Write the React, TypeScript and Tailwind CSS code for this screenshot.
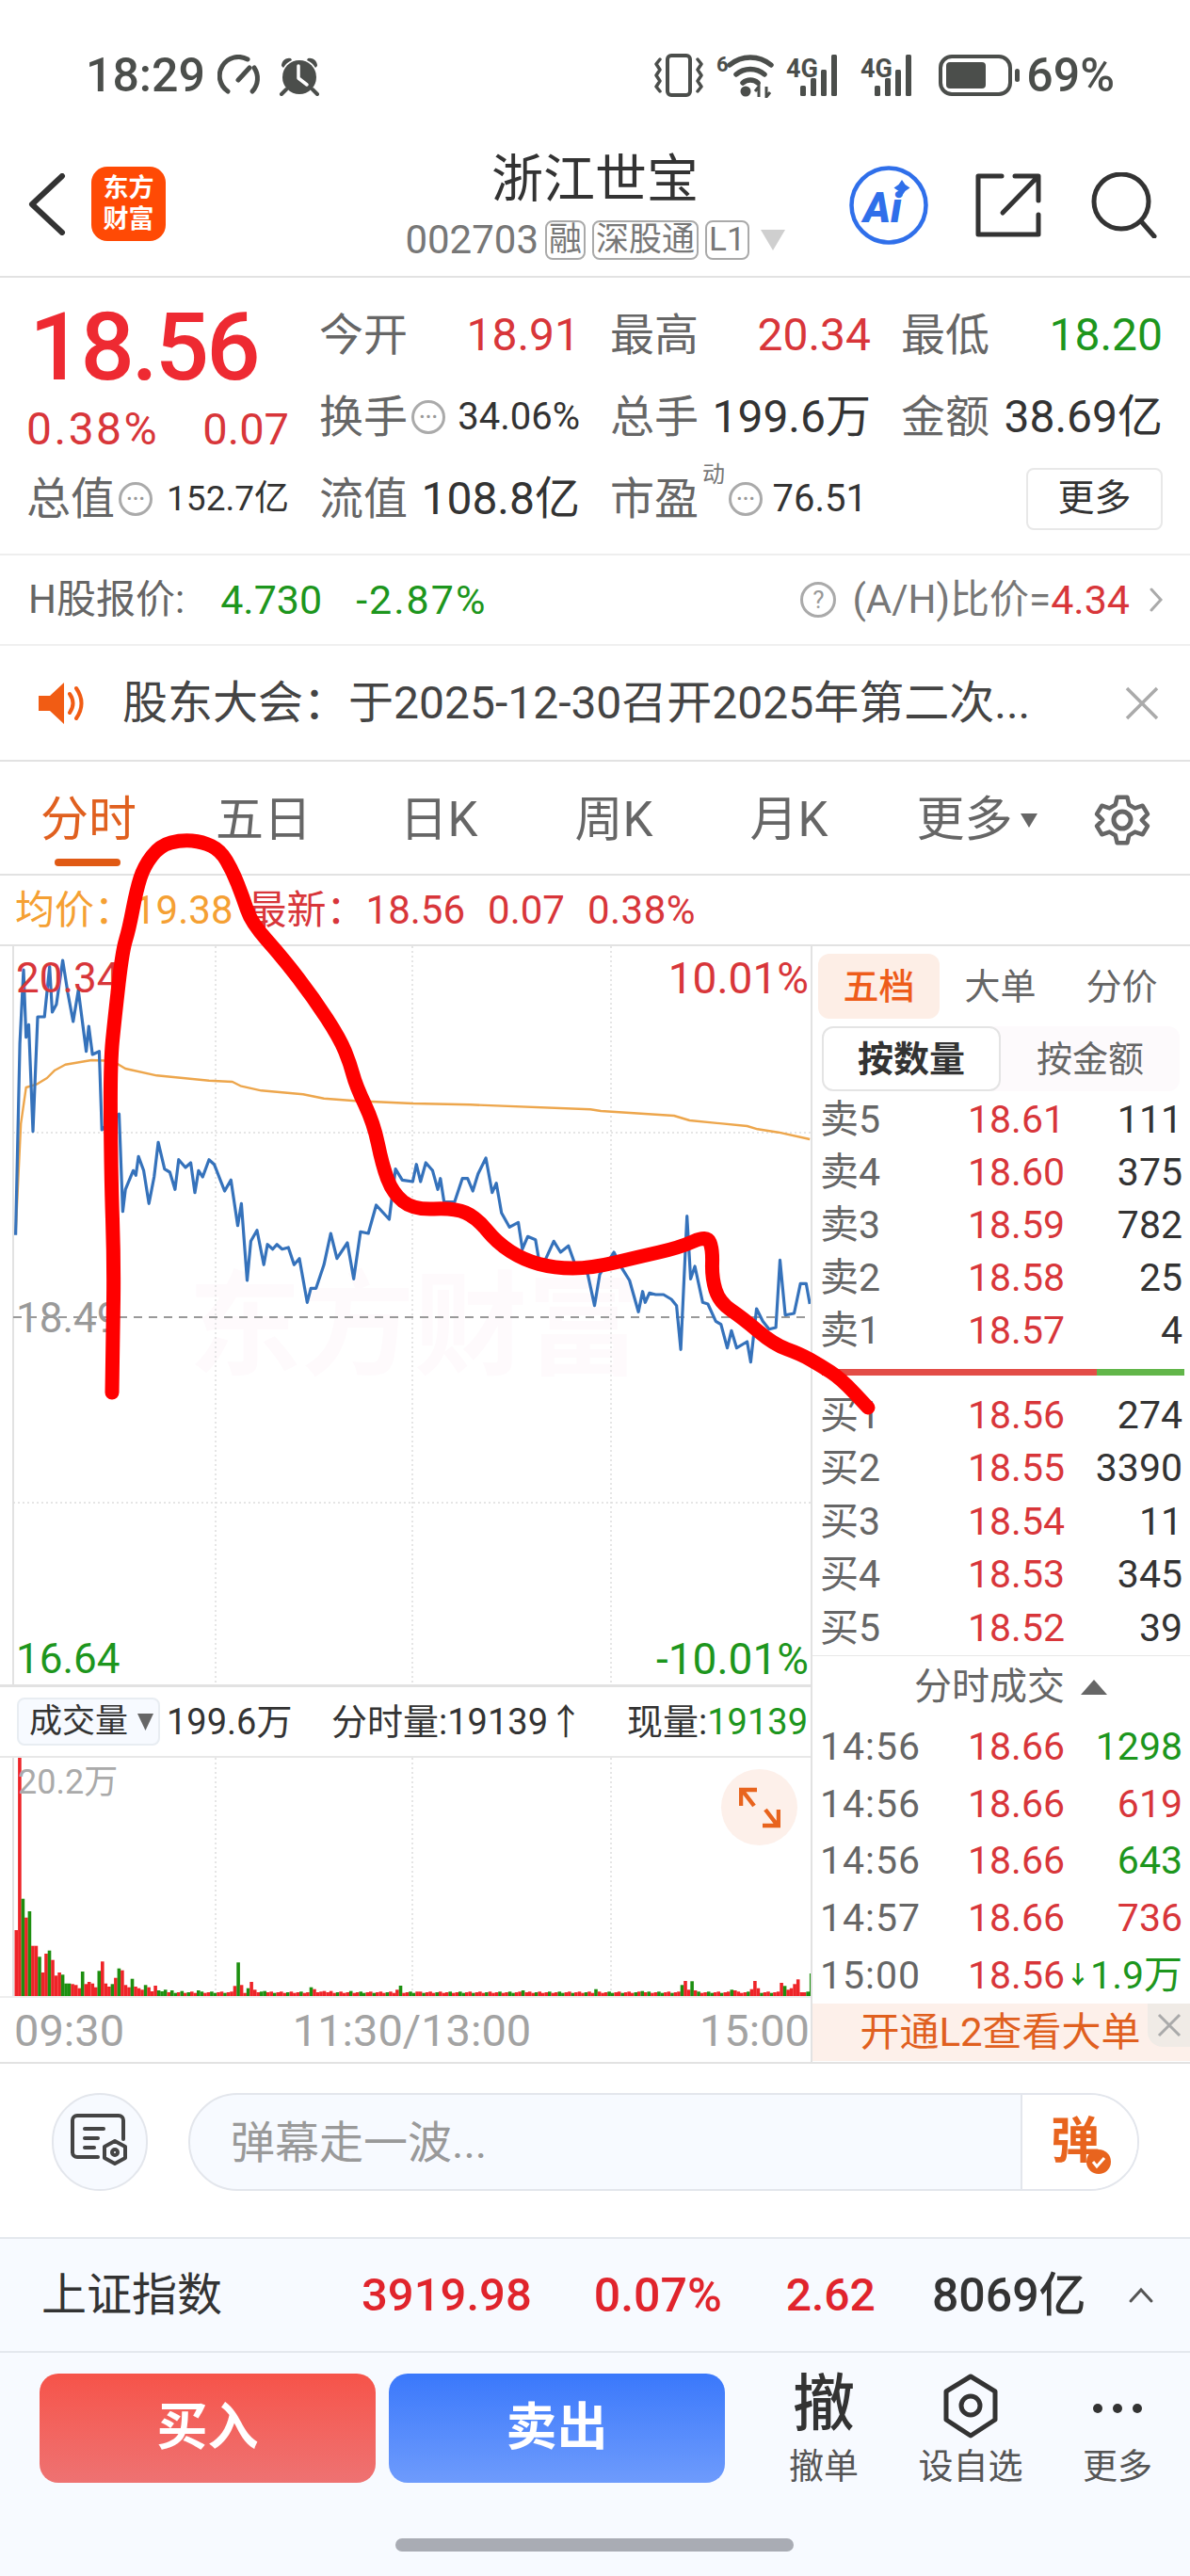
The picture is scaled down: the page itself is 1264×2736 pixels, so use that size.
const BLUE = [30,995,38,385,45,150,50,365,55,325,63,665,72,300,85,300,95,140,100,285,108,260,120,120,130,225,140,315,150,215,165,410,170,330,177,420,190,410,195,660,228,610,235,920,240,850,255,790,260,805,265,745,275,790,285,895,295,810,303,700,315,785,325,795,335,850,342,755,355,780,365,765,373,860,380,790,388,810,400,755,410,770,430,855,442,820,455,965,462,895,473,1140,480,1015,492,980,505,1090,512,1025,522,1040,530,1025,540,1040,552,1035,563,1090,573,1070,588,1210,595,1165,605,1165,620,1090,633,990,645,1070,665,1020,677,1135,690,985,705,990,720,900,745,945,757,785,770,820,790,825,797,770,805,825,815,765,828,790,838,850,843,815,850,890,870,890,885,815,895,815,905,855,915,800,930,750,942,860,950,830,960,925,975,970,992,955,1000,1040,1010,1000,1025,1010,1033,1090,1045,1070,1060,1015,1073,1050,1088,1030,1100,1085,1125,1120,1138,1220,1148,1120,1175,1050,1190,1100,1205,1140,1222,1240,1230,1175,1235,1210,1243,1180,1255,1185,1270,1185,1285,1200,1295,1220,1303,1360,1315,935,1322,1135,1330,1095,1345,1210,1355,1215,1370,1270,1380,1280,1392,1355,1400,1300,1410,1355,1430,1335,1437,1400,1448,1230,1460,1270,1472,1295,1485,1290,1493,1075,1503,1250,1520,1245,1532,1150,1543,1150,1550,1215];
const AVG = [30,990,40,640,50,525,70,515,90,495,105,470,125,452,175,438,215,440,240,465,300,487,400,503,445,507,460,520,500,535,580,547,620,560,680,568,790,576,900,580,1130,595,1150,600,1290,615,1320,630,1430,648,1450,658,1490,668,1550,690];

// hand drawn stroke, page coordinates
const SCRIBBLE = [[119,1479],[120,1420],[121,1340],[118,1250],[117,1130],[122,1080],[130,1010],[137,987],[145,945],[153,920],[170,898],[193,892],[215,894],[234,903],[247,925],[258,953],[267,980],[300,1017],[333,1060],[361,1103],[372,1130],[378,1153],[397,1193],[406,1237],[417,1267],[439,1285],[483,1283],[506,1293],[528,1320],[556,1338],[589,1347],[628,1347],[678,1335],[722,1325],[751,1312],[757,1327],[756,1357],[764,1383],[789,1400],[822,1428],[850,1438],[871,1450],[893,1464],[922,1495]];

// [index, height, 1 = green] for the tall bars, the rest is the flat tail
const VOL_BARS: [number, number, number][] = [[0,210,0],[1,760,0],[2,310,1],[3,250,0],[4,270,1],[5,160,0],[6,160,0],[7,125,1],[8,75,0],[9,135,0],[10,145,1],[11,115,0],[12,65,0],[13,75,0],[14,68,1],[15,40,1],[16,40,1],[17,38,0],[18,35,0],[19,25,0],[20,78,1],[21,38,0],[22,45,0],[23,40,0],[24,28,0],[25,80,1],[26,110,0],[27,40,0],[28,30,0],[29,38,1],[30,58,0],[31,88,1],[32,82,0],[33,35,0],[34,28,0],[35,55,1],[36,30,0],[37,25,0],[38,20,0],[39,35,1],[40,28,0],[41,15,0],[42,33,0],[43,18,1],[44,15,1],[45,20,1],[47,18,1],[50,16,1],[55,18,1],[66,32,0],[67,107,1],[68,35,0],[70,25,1],[71,45,0],[72,20,0],[75,16,1],[89,28,1],[90,22,0],[93,16,0],[95,16,0],[101,16,1],[115,20,0],[116,33,1],[121,14,0],[153,18,1],[175,22,1],[176,14,0],[189,16,1],[201,35,1],[202,48,0],[203,20,0],[204,47,1],[205,18,0],[216,20,1],[217,18,0],[222,22,0],[223,48,0],[224,25,0],[231,42,0],[232,32,1],[233,20,0],[234,25,0],[235,38,0],[236,53,0],[237,12,0],[240,72,1]];

const toPoints = (raw: number[]) => {
  const out: string[] = [];
  for (let i = 0; i < raw.length; i += 2) {
    out.push(`${(raw[i] / 1.802).toFixed(1)},${(raw[i + 1] / 3 - 25).toFixed(1)}`);
  }
  return out.join(' ');
};

const smoothPath = (pts: number[][]) => {
  let d = `M${pts[0][0]} ${pts[0][1]}`;
  for (let i = 1; i < pts.length - 1; i++) {
    const mx = (pts[i][0] + pts[i + 1][0]) / 2;
    const my = (pts[i][1] + pts[i + 1][1]) / 2;
    d += ` Q${pts[i][0]} ${pts[i][1]} ${mx} ${my}`;
  }
  const last = pts[pts.length - 1];
  return `${d} L${last[0]} ${last[1]}`;
};

const volumeBars = () => {
  const map = new Map(VOL_BARS.map((b) => [b[0], b]));
  return Array.from({ length: 241 }, (_, i) => {
    const bar = map.get(i);
    const green = bar ? bar[2] === 1 : (i * 7 + (i % 5)) % 3 === 0;
    const h = bar ? bar[1] : 10 + ((i * 13) % 3) * 2;
    return { i, green, h };
  });
};

const SELLS = [
  ['卖5', '18.61', '111'],
  ['卖4', '18.60', '375'],
  ['卖3', '18.59', '782'],
  ['卖2', '18.58', '25'],
  ['卖1', '18.57', '4'],
];
const BUYS = [
  ['买1', '18.56', '274'],
  ['买2', '18.55', '3390'],
  ['买3', '18.54', '11'],
  ['买4', '18.53', '345'],
  ['买5', '18.52', '39'],
];
const TRADES = [
  ['14:56', '18.66', '1298', 'text-[#1d961d]'],
  ['14:56', '18.66', '619', 'text-[#d8363a]'],
  ['14:56', '18.66', '643', 'text-[#1d961d]'],
  ['14:57', '18.66', '736', 'text-[#d8363a]'],
];

const Signal = () => (
  <svg width="66" height="44" viewBox="0 0 66 44" fill="#4b4e4b">
    <text x="0" y="24" fontSize="27" fontWeight="700" fontFamily="Roboto">4G</text>
    <rect x="15" y="33" width="6" height="11" rx="1.5" />
    <rect x="26" y="25" width="6" height="19" rx="1.5" />
    <rect x="37" y="16" width="6" height="28" rx="1.5" />
    <rect x="48" y="0" width="6" height="44" rx="1.5" />
  </svg>
);

const StatusBar = () => (
  <div className="flex h-[134px] items-start justify-between pl-[91px] pr-[80px] pt-[52px] text-[#4b4e4b]">
    <div className="flex items-center">
      <span className="text-[50px] font-medium leading-[56px]">18:29</span>
      <svg className="ml-[13px]" width="48" height="44" viewBox="0 0 48 44" fill="none" stroke="#4b4e4b" strokeWidth="5" strokeLinecap="round">
        <path d="M11 39A20 20 0 0 1 32 5" />
        <path d="M39 14A20 20 0 0 1 37 39" />
        <path d="M22 27L34 14" />
      </svg>
      <svg className="ml-[17px]" width="44" height="44" viewBox="0 0 44 44" fill="#4b4e4b">
        <circle cx="22" cy="24" r="18" />
        <path d="M3 12a8 8 0 0 1 10-8l1 2a18 18 0 0 0-9 8zM41 12a8 8 0 0 0-10-8l-1 2a18 18 0 0 1 9 8z" />
        <path d="M8 37l-5 5M36 37l5 5" stroke="#4b4e4b" strokeWidth="4" strokeLinecap="round" />
        <path d="M21 12v13l9 7" fill="none" stroke="#fff" strokeWidth="3.5" strokeLinecap="round" strokeLinejoin="round" />
      </svg>
    </div>
    <div className="flex items-center">
      <svg width="52" height="46" viewBox="0 0 52 46" fill="none" stroke="#4b4e4b" strokeLinecap="round" strokeLinejoin="round">
        <rect x="14" y="2" width="24" height="42" rx="4" strokeWidth="4" />
        <path d="M6 6l-4 5 4 6-4 6 4 6-4 6 4 5M46 6l4 5-4 6 4 6-4 6 4 6-4 5" strokeWidth="3.5" />
      </svg>
      <svg className="ml-[14px]" width="62" height="48" viewBox="0 0 62 48" fill="#4b4e4b">
        <text x="0" y="20" fontSize="22" fontWeight="700" fontFamily="Roboto">6</text>
        <path d="M14 13a34 34 0 0 1 44 0M21 23a23 23 0 0 1 30 0M28 32a12 12 0 0 1 16 0" fill="none" stroke="#4b4e4b" strokeWidth="5.5" strokeLinecap="round" />
        <circle cx="31" cy="41" r="5.5" />
        <path d="M45 47V36l-4 5M53 36v11l4-5" fill="none" stroke="#4b4e4b" strokeWidth="3" />
      </svg>
      <div className="ml-[12px]"><Signal /></div>
      <div className="ml-[13px]"><Signal /></div>
      <svg className="ml-[17px]" width="87" height="44" viewBox="0 0 87 44" fill="none">
        <rect x="2" y="2" width="74" height="40" rx="12" stroke="#4b4e4b" strokeWidth="4" />
        <rect x="8" y="8" width="42" height="28" rx="4" fill="#4b4e4b" />
        <rect x="81" y="15" width="5" height="14" rx="2.5" fill="#4b4e4b" />
      </svg>
      <span className="ml-[6px] text-[50px] font-medium leading-[56px]">69%</span>
    </div>
  </div>
);

const Tag = ({ text }: { text: string }) => (
  <span className="ml-[7px] rounded-[8px] border-2 border-[#aaa] px-[2px] text-[35px] leading-[38px]">{text}</span>
);

const NavBar = () => (
  <div className="relative flex h-[161px] items-start border-b-2 border-[#e2e2e2]">
    <svg className="ml-[30px] mt-[50px]" width="40" height="66" viewBox="0 0 40 66" fill="none" stroke="#333" strokeWidth="6" strokeLinecap="round" strokeLinejoin="round">
      <path d="M36 3L4 33l32 30" />
    </svg>
    <div className="ml-[27px] mt-[43px] flex h-[79px] w-[79px] flex-col items-center justify-center rounded-[17px] bg-[#ff4a05] text-[27px] font-bold leading-[33px] text-white">
      <span>东方</span>
      <span>财富</span>
    </div>
    <div className="absolute left-0 right-0 top-[20px] flex flex-col items-center">
      <span className="text-[55px] leading-[72px] text-[#333]">浙江世宝</span>
      <div className="mt-[7px] flex items-center text-[#777]">
        <span className="text-[42px] leading-[44px]">002703</span>
        <Tag text="融" />
        <Tag text="深股通" />
        <Tag text="L1" />
        <svg className="ml-[12px]" width="26" height="22" viewBox="0 0 26 22" fill="#cfcfcf"><path d="M0 0h26L13 22z" /></svg>
      </div>
    </div>
    <div className="ml-auto mr-[35px] mt-[42px] flex items-center">
      <svg width="84" height="84" viewBox="0 0 84 84" fill="none">
        <circle cx="42" cy="42" r="39.5" stroke="#2f6fea" strokeWidth="4.5" />
        <text x="15" y="60" fontSize="44" fontWeight="900" fontStyle="italic" fontFamily="Roboto" fill="#2f6fea">Ai</text>
        <path d="M56 15l3.5 5 5 3.5-5 3.5-3.5 5-3.5-5-5-3.5 5-3.5z" fill="#2f6fea" />
      </svg>
      <svg className="ml-[50px]" width="70" height="68" viewBox="0 0 70 68" fill="none" stroke="#333" strokeWidth="5" strokeLinecap="round" strokeLinejoin="round">
        <path d="M28 3H3v62h64V44" />
        <path d="M29 42L66 4M42 3h25v26" />
      </svg>
      <svg className="ml-[53px]" width="70" height="70" viewBox="0 0 70 70" fill="none" stroke="#333" strokeWidth="5" strokeLinecap="round">
        <circle cx="32" cy="31" r="29" />
        <path d="M53 52l14 16" />
      </svg>
    </div>
  </div>
);

const QuoteCell = ({ label, value, color = 'text-[#333]', size = 'text-[48px]', hint, sup }: { label: string; value: string; color?: string; size?: string; hint?: boolean; sup?: boolean }) => (
  <div className="flex items-center justify-between leading-none">
    <span className="flex items-center text-[47px] text-[#666]">
      <span className="relative">
        {label}
        {sup && <span className="absolute -right-[28px] -top-[14px] text-[24px] text-[#777]">动</span>}
      </span>
      {hint && (
        <span className={`flex h-[36px] w-[36px] items-center justify-center rounded-full border-[3px] border-[#aaa] text-[20px] font-bold leading-none text-[#999] ${sup ? 'ml-[32px]' : 'ml-[4px]'}`}>⋯</span>
      )}
    </span>
    <span className={`${size} ${color}`}>{value}</span>
  </div>
);

const Quote = () => (
  <div className="h-[295px] border-b-2 border-[#eeeeee] pl-[28px] pt-[17px]">
    <div className="grid grid-cols-[279px_277px_277px_278px] grid-rows-[87px_87px_87px] items-center gap-x-[32px]">
      <div className="pl-[3px] pt-[26px] text-[101px] font-medium leading-none tracking-[-3px] text-[#ee2a32]">18.56</div>
      <QuoteCell label="今开" value="18.91" color="text-[#d8363a]" />
      <QuoteCell label="最高" value="20.34" color="text-[#d8363a]" />
      <QuoteCell label="最低" value="18.20" color="text-[#1d961d]" />
      <div className="flex justify-between pt-[26px] leading-none text-[#d8363a]">
        <span className="text-[48px] tracking-[2.500px]">0.38%</span>
        <span className="text-[47px]">0.07</span>
      </div>
      <QuoteCell label="换手" value="34.06%" size="text-[40px]" hint />
      <QuoteCell label="总手" value="199.6万" />
      <QuoteCell label="金额" value="38.69亿" />
      <QuoteCell label="总值" value="152.7亿" size="text-[37px]" hint />
      <QuoteCell label="流值" value="108.8亿" />
      <div className="pr-[4px]">
        <QuoteCell label="市盈" value="76.51" size="text-[40px]" hint sup />
      </div>
      <div className="flex justify-end">
        <span className="flex h-[66px] w-[145px] items-center justify-center rounded-[8px] border-2 border-[#e8e8e8] text-[39px] text-[#333]">更多</span>
      </div>
    </div>
  </div>
);

const HShare = () => (
  <div className="flex h-[96px] items-center border-b-2 border-[#f0f0f0] pl-[30px] pr-[29px] text-[43px] leading-none">
    <span className="text-[42px] text-[#666]">H股报价:</span>
    <span className="ml-[38px] text-[#1d961d]">4.730</span>
    <span className="ml-[36px] tracking-[2px] text-[#1d961d]">-2.87%</span>
    <span className="ml-auto flex h-[38px] w-[38px] items-center justify-center rounded-full border-[3px] border-[#aaa] text-[26px] text-[#999]">?</span>
    <span className="ml-[17px] text-[42px] text-[#777]">(A/H)比价=</span>
    <span className="text-[#d8363a]">4.34</span>
    <svg className="ml-[21px]" width="14" height="28" viewBox="0 0 14 28" fill="none" stroke="#aaa" strokeWidth="3" strokeLinecap="round"><path d="M2 3l10 11L2 25" /></svg>
  </div>
);

const Notice = () => (
  <div className="flex h-[123px] items-center border-b-2 border-[#e2e2e2] pl-[40px] pr-[33px]">
    <svg width="54" height="46" viewBox="0 0 54 46" fill="#f15c14">
      <path d="M1 15h12L28 1v44L13 31H1z" />
      <path d="M34 13q7 10 0 20M41 7q11 16 0 32" fill="none" stroke="#f15c14" strokeWidth="4" strokeLinecap="round" />
    </svg>
    <span className="ml-[36px] whitespace-nowrap text-[48px] leading-none text-[#444]">股东大会：于2025-12-30召开2025年第二次...</span>
    <svg className="ml-auto" width="36" height="36" viewBox="0 0 36 36" fill="none" stroke="#aaa" strokeWidth="3.5"><path d="M2 2l32 32M34 2L2 34" /></svg>
  </div>
);

const Tabs = () => (
  <div className="relative grid h-[121px] grid-cols-[186px_186px_186px_186px_186px_186px_1fr] items-center border-b-2 border-[#e2e2e2] pl-[1px] pt-[4px] text-[51px] leading-none text-[#666]">
    <span className="text-center text-[#e0601f]">分时</span>
    <span className="text-center">五日</span>
    <span className="text-center">日K</span>
    <span className="text-center">周K</span>
    <span className="text-center">月K</span>
    <span className="flex items-center justify-center pl-[27px]">
      更多
      <svg className="ml-[8px]" width="18" height="18" viewBox="0 0 18 18" fill="#666"><path d="M0 2h18L9 17z" /></svg>
    </span>
    <svg className="ml-[45px]" width="60" height="60" viewBox="0 0 60 60" fill="none" stroke="#666" strokeWidth="5" strokeLinejoin="round">
      <path d="M24 3h12l2 9 7 4 9-3 6 10-7 7 0 0 7 7-6 10-9-3-7 4-2 9H24l-2-9-7-4-9 3-6-10 7-7-7-7 6-10 9 3 7-4z" transform="translate(3 3) scale(0.9)" />
      <circle cx="30" cy="30" r="9" />
    </svg>
    <div className="absolute bottom-[8px] left-[58px] h-[8px] w-[70px] rounded-full bg-[#e05a14]" />
  </div>
);

const InfoRow = () => (
  <div className="flex h-[75px] items-center border-b-2 border-[#e2e2e2] pl-[16px] text-[42px] leading-none">
    <span className="text-[#f5a033]">均价：</span>
    <span className="text-[#f5a033]">19.38</span>
    <span className="ml-[15px] text-[#d8363a]">最新：</span>
    <span className="text-[#d8363a]">18.56</span>
    <span className="ml-[24px] text-[#d8363a]">0.07</span>
    <span className="ml-[24px] tracking-[0.5px] text-[#d8363a]">0.38%</span>
  </div>
);

const PriceChart = () => (
  <div className="relative h-[787px] overflow-hidden border-b-[3px] border-[#e2e2e2]">
    <span className="absolute left-[200px] top-[330px] text-[120px] font-bold leading-[150px] text-[#fefafc]">东方财富</span>
    <svg className="relative block" width="861" height="787" viewBox="0 0 861 787" fill="none">
      <path d="M14 0V787" stroke="#e2e2e2" strokeWidth="2" />
      <path d="M229 0V787M438 0V787M649 0V787" stroke="#dddddd" strokeWidth="1.5" strokeDasharray="2 3" />
      <path d="M14 198H861M14 591H861" stroke="#dddddd" strokeWidth="1.5" strokeDasharray="2 3" />
      <path d="M14 394H861" stroke="#999" strokeWidth="2" strokeDasharray="9 7" />
      <polyline points={toPoints(AVG)} stroke="#eda64c" strokeWidth="2.4" strokeLinejoin="round" />
      <polyline points={toPoints(BLUE)} stroke="#3572bb" strokeWidth="3.2" strokeLinejoin="round" />
    </svg>
    <span className="absolute left-[17px] top-[8px] text-[44px] leading-[52px] text-[#d8363a]">20.34</span>
    <span className="absolute right-[2px] top-[8px] text-[46px] leading-[52px] text-[#d8363a]">10.01%</span>
    <span className="absolute left-[17px] top-[369px] text-[44px] leading-[52px] text-[#999]">18.49</span>
    <span className="absolute left-[17px] top-[731px] text-[44px] leading-[52px] text-[#1d961d]">16.64</span>
    <span className="absolute right-[2px] top-[731px] text-[46px] leading-[52px] text-[#1d961d]">-10.01%</span>
  </div>
);

const VolumeHeader = () => (
  <div className="flex h-[73px] items-center overflow-hidden whitespace-nowrap text-[38px] leading-none text-[#333]">
    <div className="ml-[18px] flex h-[51px] w-[152px] items-center rounded-[8px] border-2 border-[#e8edf2] bg-[#f7faff] pl-[11px] text-[35px]">
      成交量
      <svg className="ml-[10px]" width="17" height="22" viewBox="0 0 17 22" fill="#666"><path d="M0 2h17L8.500 20z" /></svg>
    </div>
    <span className="ml-[7px] w-[175px]">199.6万</span>
    <span className="w-[314px]">分时量:19139↑</span>
    <span>现量:<span className="text-[#1d961d]">19139</span></span>
  </div>
);

const VolumeChart = () => (
  <div className="relative h-[255px] border-t-2 border-[#e8e8e8]">
    <svg className="block" width="861" height="253" viewBox="0 0 861 253" fill="none">
      <path d="M14 0V253" stroke="#e2e2e2" strokeWidth="2" />
      <path d="M229 0V253M438 0V253M649 0V253" stroke="#dddddd" strokeWidth="1.5" strokeDasharray="2 3" />
      {volumeBars().map(({ i, green, h }) => (
        <rect key={i} x={((28 + i * 6.34) / 1.802).toFixed(1)} y={(253 - h / 3).toFixed(1)} width="3.6" height={(h / 3).toFixed(1)} fill={green ? '#1d8f10' : '#ee2428'} />
      ))}
    </svg>
    <span className="absolute left-[19px] top-[4px] text-[36px] leading-[44px] text-[#aaa]">20.2万</span>
    <div className="absolute left-[766px] top-[12px] flex h-[81px] w-[81px] items-center justify-center rounded-full bg-[#fdf0ea]">
      <svg width="44" height="44" viewBox="0 0 44 44" fill="none" stroke="#e8641e" strokeWidth="4.5">
        <path d="M2 20V3h17M3 3l13 17M42 24v17H25M41 41L28 24" />
      </svg>
    </div>
  </div>
);

const TimeAxis = () => (
  <div className="flex h-[70px] items-center justify-between border-t-2 border-[#eeeeee] pl-[15px] pr-[1px] text-[47px] leading-none text-[#a3a3a3]">
    <span>09:30</span>
    <span>11:30/13:00</span>
    <span>15:00</span>
  </div>
);

const OrderRow = ({ row, tall }: { row: string[]; tall?: boolean }) => (
  <div className={`grid grid-cols-[157px_1fr_auto] items-center pl-[8px] pr-[8px] text-[41px] leading-none ${tall ? 'h-[56.5px]' : 'h-[56px]'}`}>
    <span className="text-[#666]">{row[0]}</span>
    <span className="text-[#d8363a]">{row[1]}</span>
    <span className="text-[#333]">{row[2]}</span>
  </div>
);

const SidePanel = () => (
  <div className="relative w-[403px] border-l-2 border-[#e2e2e2]">
    <div className="flex items-center pl-[6px] pt-[8px] text-[38px] leading-none text-[#666]">
      <span className="flex h-[69px] w-[129px] items-center justify-center rounded-[12px] bg-[#fdeee6] font-medium text-[#ee5c1a]">五档</span>
      <span className="w-[129px] text-center">大单</span>
      <span className="w-[129px] text-center">分价</span>
    </div>
    <div className="ml-[10px] mt-[8px] flex h-[69px] w-[380px] items-center rounded-[12px] bg-[#fdfafc] text-[38px] leading-none">
      <span className="flex h-[69px] w-[190px] items-center justify-center rounded-[12px] border-2 border-[#e4e4e4] bg-white font-bold text-[#333]">按数量</span>
      <span className="flex-1 text-center text-[#666]">按金额</span>
    </div>
    <div className="pt-[2px]">
      {SELLS.map((row) => <OrderRow key={row[0]} row={row} />)}
    </div>
    <div className="ml-[10px] mr-[6px] mt-[13px] flex h-[7px]">
      <div className="w-[292px] bg-[#e34d47]" />
      <div className="flex-1 bg-[#62b64a]" />
    </div>
    <div className="pt-[14px]">
      {BUYS.map((row) => <OrderRow key={row[0]} row={row} tall />)}
    </div>
    <div className="flex h-[68px] items-center justify-center border-t border-[#e8e8e8] pl-[20px] text-[40px] leading-none text-[#666]">
      分时成交
      <svg className="ml-[17px]" width="28" height="16" viewBox="0 0 28 16" fill="#666"><path d="M0 16L14 0l14 16z" /></svg>
    </div>
    {TRADES.map((row, i) => (
      <div key={i} className="grid h-[60.6px] grid-cols-[157px_1fr_auto] items-center pl-[8px] pr-[8px] text-[41px] leading-none">
        <span className="tracking-[1px] text-[#666]">{row[0]}</span>
        <span className="text-[#d8363a]">{row[1]}</span>
        <span className={row[3]}>{row[2]}</span>
      </div>
    ))}
    <div className="grid h-[60.6px] grid-cols-[157px_1fr_auto] items-center pl-[8px] pr-[8px] text-[41px] leading-none">
      <span className="tracking-[1px] text-[#666]">15:00</span>
      <span className="text-[#d8363a]">18.56</span>
      <span className="flex items-center whitespace-nowrap text-[#1d961d]">
        <span className="text-[26px] font-bold">↓</span>
        1.9万
      </span>
    </div>
    <div className="relative flex h-[61px] items-center justify-center bg-[#fdf0ea] pr-[2px] text-[42px] leading-none text-[#e0601f]">
      开通L2查看大单
      <div className="absolute right-0 top-0 flex h-[46px] w-[45px] items-center justify-center rounded-bl-[16px] bg-[#f0ebe6]">
        <svg width="26" height="26" viewBox="0 0 26 26" fill="none" stroke="#aaa" strokeWidth="3"><path d="M2 2l22 22M24 2L2 24" /></svg>
      </div>
    </div>
  </div>
);

const Danmaku = () => (
  <div className="flex h-[186px] items-start border-t-2 border-[#e2e2e2] pl-[55px] pt-[31px]">
    <div className="flex h-[104px] w-[102px] items-center justify-center rounded-full border-2 border-[#e3e6ec] bg-[#f7faff]">
      <svg width="64" height="62" viewBox="0 0 64 62" fill="none" stroke="#444" strokeWidth="4" strokeLinecap="round" strokeLinejoin="round">
        <path d="M30 47H8a5 5 0 0 1-5-5V8a5 5 0 0 1 5-5h44a5 5 0 0 1 5 5v20" />
        <path d="M16 17h20M16 27h14M16 37h10" />
        <path d="M48 30l11 6v12l-11 6-11-6V36z" />
        <circle cx="48" cy="42" r="3" />
      </svg>
    </div>
    <div className="ml-[43px] flex h-[104px] w-[1010px] items-center rounded-full border-2 border-[#e3e6ec] bg-[#f7faff] pl-[43px]">
      <span className="text-[47px] leading-none text-[#999]">弹幕走一波...</span>
      <div className="ml-auto flex h-full w-[124px] items-center justify-start rounded-r-full border-l-2 border-[#e3e6ec] bg-white pl-[30px]">
        <span className="relative text-[52px] font-bold leading-none text-[#e8641e]">
          弹
          <svg className="absolute -bottom-[8px] -right-[12px]" width="26" height="26" viewBox="0 0 26 26">
            <circle cx="13" cy="13" r="13" fill="#e8641e" />
            <path d="M7 13l4 5 8-9" fill="none" stroke="#fff" strokeWidth="3" />
          </svg>
        </span>
      </div>
    </div>
  </div>
);

const IndexRow = () => (
  <div className="flex h-[123px] items-center border-y-2 border-[#e4e8ee] bg-[#f7faff] pl-[44px] font-medium leading-none">
    <span className="text-[48px] font-normal text-[#333]">上证指数</span>
    <span className="ml-[148px] text-[49px] text-[#e0242c]">3919.98</span>
    <span className="ml-[66px] text-[50px] text-[#e0242c]">0.07%</span>
    <span className="ml-[68px] text-[48px] text-[#e0242c]">2.62</span>
    <span className="ml-[60px] text-[50px] text-[#333]">8069亿</span>
    <svg className="ml-[44px]" width="28" height="18" viewBox="0 0 28 18" fill="none" stroke="#555" strokeWidth="3" strokeLinecap="round"><path d="M3 15L14 3l11 12" /></svg>
  </div>
);

const BottomBar = () => (
  <div className="h-[237px] bg-[#f7faff] pt-[22px]">
    <div className="flex items-start whitespace-nowrap pl-[42px]">
      <div className="flex h-[116px] w-[357px] items-center justify-center rounded-[20px] bg-gradient-to-b from-[#f65349] to-[#ee7272] text-[54px] font-bold leading-none text-white">买入</div>
      <div className="ml-[14px] flex h-[116px] w-[357px] items-center justify-center rounded-[20px] bg-gradient-to-b from-[#3a78fb] to-[#6e9bfc] text-[54px] font-bold leading-none text-white">卖出</div>
      <div className="ml-[68px] flex w-[74px] flex-col items-center text-[#555]">
        <span className="h-[78px] text-[66px] font-medium leading-[66px] text-[#333]">撤</span>
        <span className="text-[37px] leading-[44px]">撤单</span>
      </div>
      <div className="ml-[63px] flex w-[112px] flex-col items-center text-[#555]">
        <svg className="h-[78px]" width="60" height="78" viewBox="0 0 60 78" fill="none" stroke="#333" strokeWidth="5" strokeLinejoin="round">
          <path d="M30 3l26 16v30L30 66 4 49V19z" />
          <circle cx="30" cy="34" r="10" />
        </svg>
        <span className="text-[37px] leading-[44px]">设自选</span>
      </div>
      <div className="ml-[63px] flex w-[74px] flex-col items-center text-[#555]">
        <svg className="h-[78px]" width="56" height="78" viewBox="0 0 56 78" fill="#333">
          <circle cx="7" cy="37" r="5" />
          <circle cx="28" cy="37" r="5" />
          <circle cx="49" cy="37" r="5" />
        </svg>
        <span className="text-[37px] leading-[44px]">更多</span>
      </div>
    </div>
    <div className="ml-[420px] mt-[53px] h-[14px] w-[423px] rounded-full bg-[#a9acb4]" />
  </div>
);

export default function App() {
  return (
    <div className="relative h-[2736px] w-[1264px] overflow-hidden bg-white font-[family-name:Roboto,'Noto_Sans_CJK_SC',sans-serif]">
      <StatusBar />
      <NavBar />
      <Quote />
      <HShare />
      <Notice />
      <Tabs />
      <InfoRow />
      <div className="flex h-[1185px]">
        <div className="w-[861px]">
          <PriceChart />
          <VolumeHeader />
          <VolumeChart />
          <TimeAxis />
        </div>
        <SidePanel />
      </div>
      <Danmaku />
      <IndexRow />
      <BottomBar />
      <svg className="pointer-events-none absolute inset-0" width="1264" height="2736" viewBox="0 0 1264 2736" fill="none">
        <path d={smoothPath(SCRIBBLE)} stroke="#ff0000" strokeWidth="15" strokeLinecap="round" strokeLinejoin="round" />
      </svg>
    </div>
  );
}
